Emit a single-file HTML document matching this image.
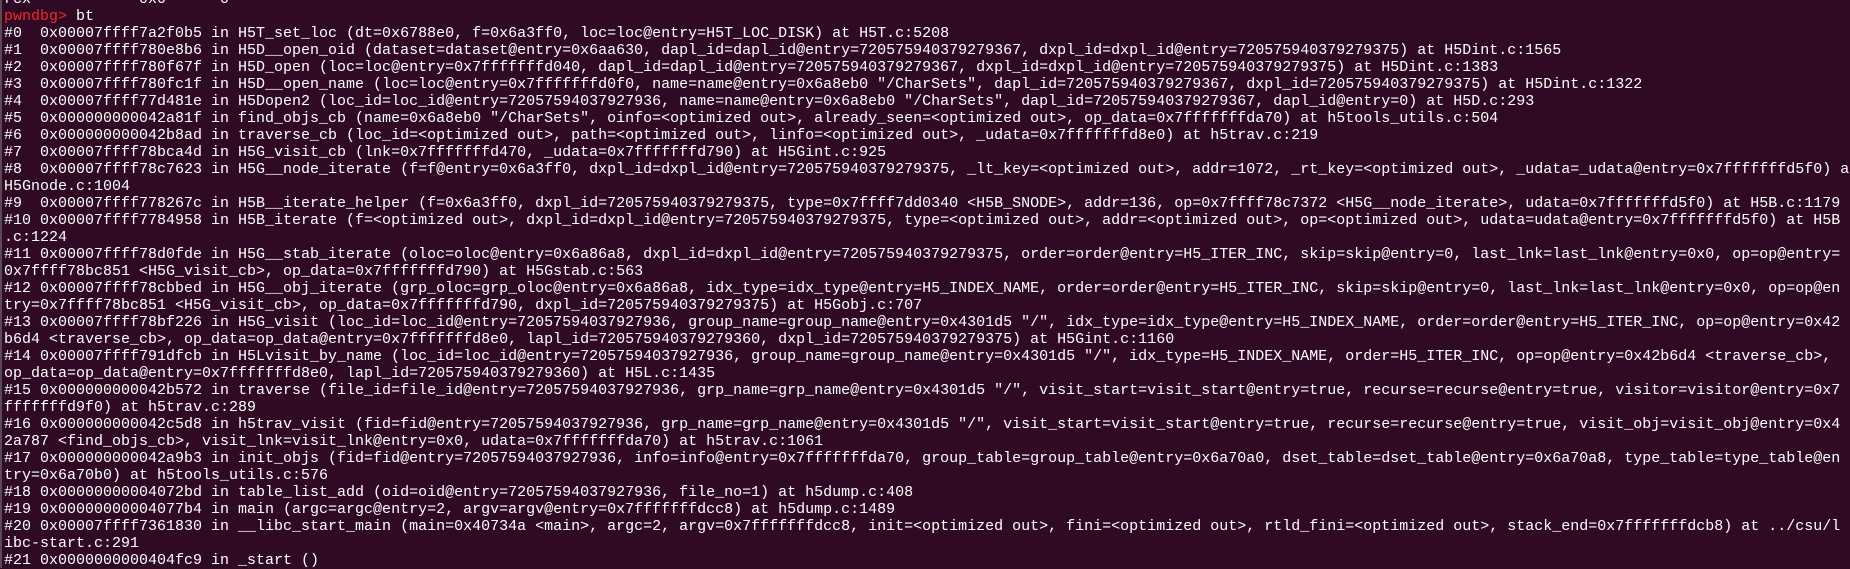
<!DOCTYPE html>
<html><head><meta charset="utf-8"><style>
html,body{margin:0;padding:0;background:#300a24;width:1850px;height:568px;overflow:hidden}
body{border-left:2px solid #5a4a55;box-sizing:border-box}
pre{position:absolute;left:4px;top:-9px;margin:0;font-family:"Liberation Mono",monospace;font-size:15px;line-height:17px;color:#ffffff;white-space:pre}
.r{color:#ef2929}
</style></head><body><pre>rcx            0x0      0
<span class="r">pwndbg&gt;</span> bt
#0  0x00007ffff7a2f0b5 in H5T_set_loc (dt=0x6788e0, f=0x6a3ff0, loc=loc@entry=H5T_LOC_DISK) at H5T.c:5208
#1  0x00007ffff780e8b6 in H5D__open_oid (dataset=dataset@entry=0x6aa630, dapl_id=dapl_id@entry=720575940379279367, dxpl_id=dxpl_id@entry=720575940379279375) at H5Dint.c:1565
#2  0x00007ffff780f67f in H5D_open (loc=loc@entry=0x7fffffffd040, dapl_id=dapl_id@entry=720575940379279367, dxpl_id=dxpl_id@entry=720575940379279375) at H5Dint.c:1383
#3  0x00007ffff780fc1f in H5D__open_name (loc=loc@entry=0x7fffffffd0f0, name=name@entry=0x6a8eb0 "/CharSets", dapl_id=720575940379279367, dxpl_id=720575940379279375) at H5Dint.c:1322
#4  0x00007ffff77d481e in H5Dopen2 (loc_id=loc_id@entry=72057594037927936, name=name@entry=0x6a8eb0 "/CharSets", dapl_id=720575940379279367, dapl_id@entry=0) at H5D.c:293
#5  0x000000000042a81f in find_objs_cb (name=0x6a8eb0 "/CharSets", oinfo=&lt;optimized out&gt;, already_seen=&lt;optimized out&gt;, op_data=0x7fffffffda70) at h5tools_utils.c:504
#6  0x000000000042b8ad in traverse_cb (loc_id=&lt;optimized out&gt;, path=&lt;optimized out&gt;, linfo=&lt;optimized out&gt;, _udata=0x7fffffffd8e0) at h5trav.c:219
#7  0x00007ffff78bca4d in H5G_visit_cb (lnk=0x7fffffffd470, _udata=0x7fffffffd790) at H5Gint.c:925
#8  0x00007ffff78c7623 in H5G__node_iterate (f=f@entry=0x6a3ff0, dxpl_id=dxpl_id@entry=720575940379279375, _lt_key=&lt;optimized out&gt;, addr=1072, _rt_key=&lt;optimized out&gt;, _udata=_udata@entry=0x7fffffffd5f0) at 
H5Gnode.c:1004
#9  0x00007ffff778267c in H5B__iterate_helper (f=0x6a3ff0, dxpl_id=720575940379279375, type=0x7ffff7dd0340 &lt;H5B_SNODE&gt;, addr=136, op=0x7ffff78c7372 &lt;H5G__node_iterate&gt;, udata=0x7fffffffd5f0) at H5B.c:1179
#10 0x00007ffff7784958 in H5B_iterate (f=&lt;optimized out&gt;, dxpl_id=dxpl_id@entry=720575940379279375, type=&lt;optimized out&gt;, addr=&lt;optimized out&gt;, op=&lt;optimized out&gt;, udata=udata@entry=0x7fffffffd5f0) at H5B
.c:1224
#11 0x00007ffff78d0fde in H5G__stab_iterate (oloc=oloc@entry=0x6a86a8, dxpl_id=dxpl_id@entry=720575940379279375, order=order@entry=H5_ITER_INC, skip=skip@entry=0, last_lnk=last_lnk@entry=0x0, op=op@entry=
0x7ffff78bc851 &lt;H5G_visit_cb&gt;, op_data=0x7fffffffd790) at H5Gstab.c:563
#12 0x00007ffff78cbbed in H5G__obj_iterate (grp_oloc=grp_oloc@entry=0x6a86a8, idx_type=idx_type@entry=H5_INDEX_NAME, order=order@entry=H5_ITER_INC, skip=skip@entry=0, last_lnk=last_lnk@entry=0x0, op=op@en
try=0x7ffff78bc851 &lt;H5G_visit_cb&gt;, op_data=0x7fffffffd790, dxpl_id=720575940379279375) at H5Gobj.c:707
#13 0x00007ffff78bf226 in H5G_visit (loc_id=loc_id@entry=72057594037927936, group_name=group_name@entry=0x4301d5 "/", idx_type=idx_type@entry=H5_INDEX_NAME, order=order@entry=H5_ITER_INC, op=op@entry=0x42
b6d4 &lt;traverse_cb&gt;, op_data=op_data@entry=0x7fffffffd8e0, lapl_id=720575940379279360, dxpl_id=720575940379279375) at H5Gint.c:1160
#14 0x00007ffff791dfcb in H5Lvisit_by_name (loc_id=loc_id@entry=72057594037927936, group_name=group_name@entry=0x4301d5 "/", idx_type=H5_INDEX_NAME, order=H5_ITER_INC, op=op@entry=0x42b6d4 &lt;traverse_cb&gt;, 
op_data=op_data@entry=0x7fffffffd8e0, lapl_id=720575940379279360) at H5L.c:1435
#15 0x000000000042b572 in traverse (file_id=file_id@entry=72057594037927936, grp_name=grp_name@entry=0x4301d5 "/", visit_start=visit_start@entry=true, recurse=recurse@entry=true, visitor=visitor@entry=0x7
fffffffd9f0) at h5trav.c:289
#16 0x000000000042c5d8 in h5trav_visit (fid=fid@entry=72057594037927936, grp_name=grp_name@entry=0x4301d5 "/", visit_start=visit_start@entry=true, recurse=recurse@entry=true, visit_obj=visit_obj@entry=0x4
2a787 &lt;find_objs_cb&gt;, visit_lnk=visit_lnk@entry=0x0, udata=0x7fffffffda70) at h5trav.c:1061
#17 0x000000000042a9b3 in init_objs (fid=fid@entry=72057594037927936, info=info@entry=0x7fffffffda70, group_table=group_table@entry=0x6a70a0, dset_table=dset_table@entry=0x6a70a8, type_table=type_table@en
try=0x6a70b0) at h5tools_utils.c:576
#18 0x00000000004072bd in table_list_add (oid=oid@entry=72057594037927936, file_no=1) at h5dump.c:408
#19 0x00000000004077b4 in main (argc=argc@entry=2, argv=argv@entry=0x7fffffffdcc8) at h5dump.c:1489
#20 0x00007ffff7361830 in __libc_start_main (main=0x40734a &lt;main&gt;, argc=2, argv=0x7fffffffdcc8, init=&lt;optimized out&gt;, fini=&lt;optimized out&gt;, rtld_fini=&lt;optimized out&gt;, stack_end=0x7fffffffdcb8) at ../csu/l
ibc-start.c:291
#21 0x0000000000404fc9 in _start ()</pre></body></html>
